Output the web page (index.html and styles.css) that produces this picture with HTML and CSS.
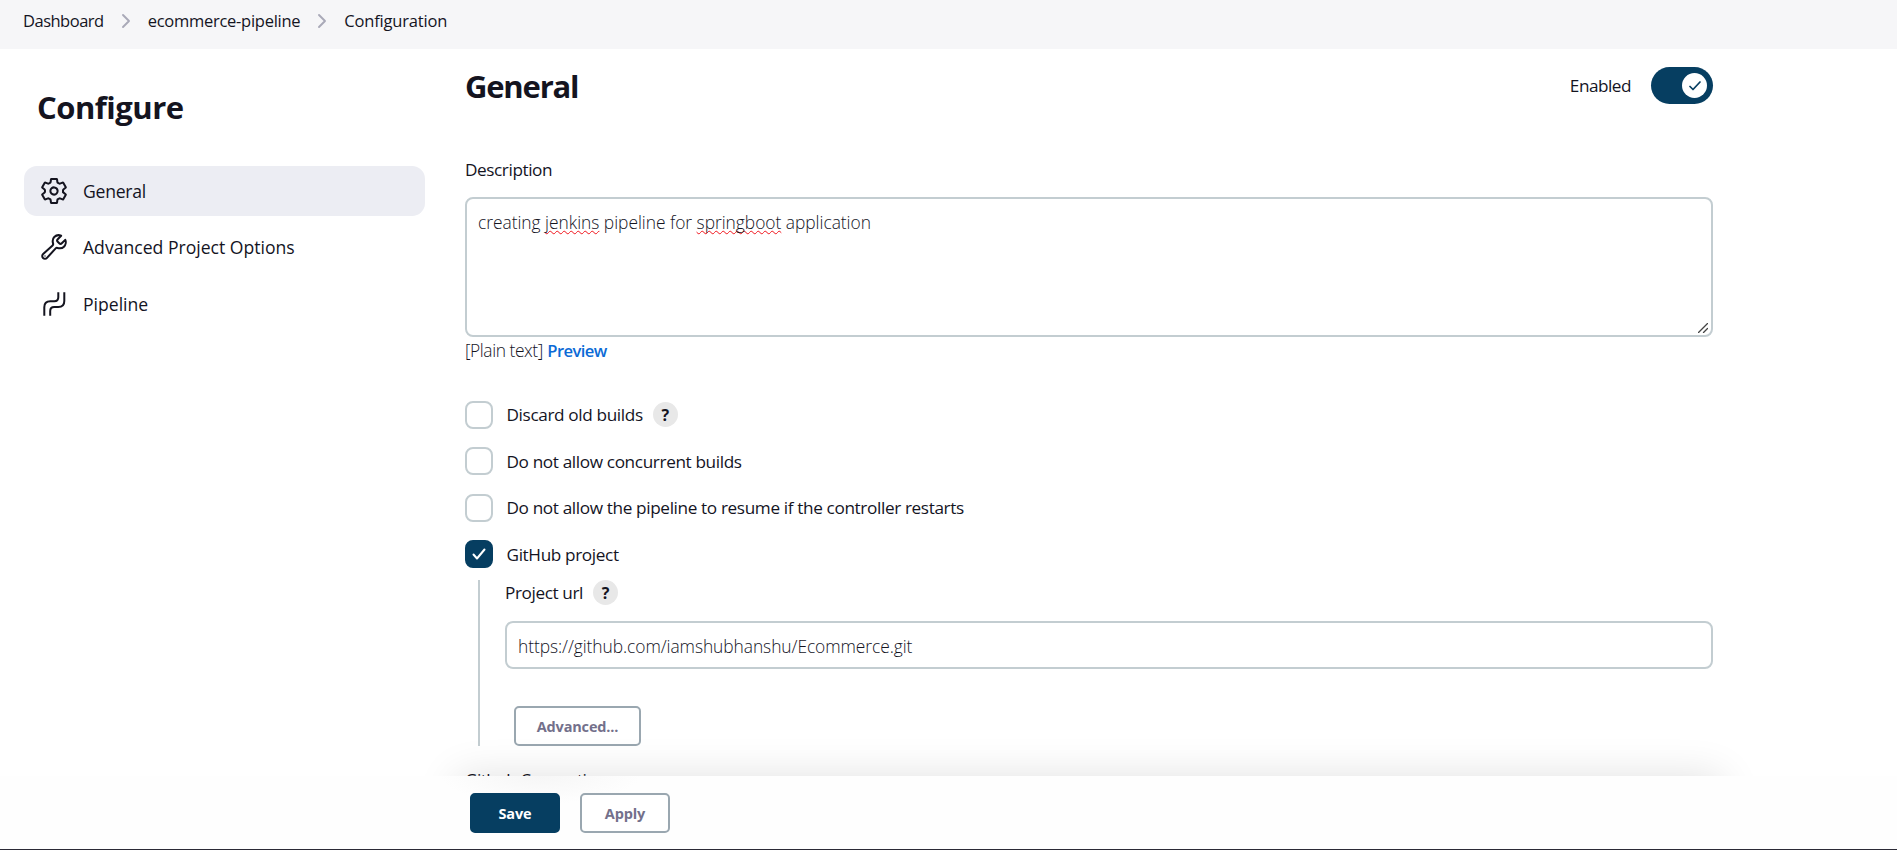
FILE: index.html
```html
<!DOCTYPE html>
<html lang="en">
<head>
<meta charset="utf-8">
<title>ecommerce-pipeline Config</title>
<link rel="stylesheet" href="styles.css">
</head>
<body>
<nav class="breadcrumbs">
  <span class="crumb crumb-root">Dashboard</span>
  <svg class="chevron" viewBox="0 0 10 16"><path d="M2 2l6 6-6 6"/></svg>
  <span class="crumb">ecommerce-pipeline</span>
  <svg class="chevron" viewBox="0 0 10 16"><path d="M2 2l6 6-6 6"/></svg>
  <span class="crumb crumb-last">Configuration</span>
</nav>
<div class="page">
  <aside class="sidebar">
    <h1 class="title">Configure</h1>
    <div class="task task-active">
      <svg class="icon" viewBox="26 26 460 460"><path d="M262.29 192.31a64 64 0 1057.4 57.4 64.13 64.13 0 00-57.4-57.4zM416.39 256a154.34 154.34 0 01-1.53 20.79l45.21 35.46a10.81 10.81 0 012.45 13.75l-42.77 74a10.81 10.81 0 01-13.14 4.59l-44.9-18.08a16.11 16.11 0 00-15.17 1.75A164.48 164.48 0 01325 400.8a15.94 15.94 0 00-8.82 12.14l-6.73 47.89a11.08 11.08 0 01-10.68 9.17h-85.54a11.11 11.11 0 01-10.69-8.87l-6.72-47.82a16.07 16.07 0 00-9-12.22 155.3 155.3 0 01-21.46-12.57 16 16 0 00-15.11-1.71l-44.89 18.07a10.81 10.81 0 01-13.14-4.58l-42.77-74a10.8 10.8 0 012.45-13.75l38.21-30a16.05 16.05 0 006-14.08c-.36-4.17-.58-8.33-.58-12.5s.21-8.27.58-12.35a16 16 0 00-6.07-13.94l-38.19-30A10.81 10.81 0 0149.48 186l42.77-74a10.81 10.81 0 0113.14-4.59l44.9 18.08a16.11 16.11 0 0015.17-1.75A164.48 164.48 0 01187 111.2a15.94 15.94 0 008.82-12.14l6.73-47.89A11.08 11.08 0 01213.23 42h85.54a11.11 11.11 0 0110.69 8.87l6.72 47.82a16.07 16.07 0 009 12.22 155.3 155.3 0 0121.46 12.57 16 16 0 0015.11 1.71l44.89-18.07a10.81 10.81 0 0113.14 4.58l42.77 74a10.8 10.8 0 01-2.45 13.75l-38.21 30a16.05 16.05 0 00-6.05 14.08c.33 4.14.55 8.3.55 12.47z"/></svg>
      <span class="task-label task-label-active">General</span>
    </div>
    <div class="task">
      <svg class="icon" viewBox="26 26 460 460"><path d="M393.87 190a32.1 32.1 0 01-45.25 0l-26.57-26.57a32.09 32.09 0 010-45.26L382.19 58a1 1 0 00-.3-1.64c-38.82-16.64-89.15-8.16-121.11 23.57-30.58 30.35-32.32 76-21.12 115.84a31.93 31.93 0 01-9.06 32.08L64 380a48.17 48.17 0 1068 68l153.86-167a31.93 31.93 0 0131.6-9.13c39.54 10.59 84.54 8.6 114.72-21.19 32.49-32 39.5-88.56 23.75-120.93a1 1 0 00-1.6-.26z"/><path class="dot" d="M97 415h.1"/></svg>
      <span class="task-label">Advanced Project Options</span>
    </div>
    <div class="task">
      <svg class="icon icon-pipe" viewBox="0 0 26 26"><path d="M3.300 24.700V16.200q0-6 6-6h4q4 0 4-4V1.300M9.200 24.700V20q0-4 4-4h4.100q6 0 6-6V1.300"/></svg>
      <span class="task-label">Pipeline</span>
    </div>
  </aside>
  <main class="config">
    <header class="section-head">
      <h2 class="section-title">General</h2>
      <div class="toggle">
        <span class="toggle-label">Enabled</span>
        <span class="switch"><span class="knob"><svg class="knob-check" viewBox="0 0 12 10"><path d="M1 5.500l3 3L11 1"/></svg></span></span>
      </div>
    </header>
    <div class="label">Description</div>
    <div class="textarea">creating <span class="misspelt">jenkins</span> pipeline for <span class="misspelt">springboot</span> application
      <svg class="grip" viewBox="0 0 10 10"><path d="M.5 9.500l9-9M5.500 9.500l4-4"/></svg>
    </div>
    <div class="format"><span class="plain">[Plain text]</span> <a class="link">Preview</a></div>
    <div class="option"><span class="box"></span><span class="option-label">Discard old builds</span><span class="help">?</span></div>
    <div class="option"><span class="box"></span><span class="option-label">Do not allow concurrent builds</span></div>
    <div class="option"><span class="box"></span><span class="option-label">Do not allow the pipeline to resume if the controller restarts</span></div>
    <div class="option"><span class="box box-on"><svg class="box-check" viewBox="0 0 14 12"><path d="M1.500 6.500l3.500 4L12.500 1.500"/></svg></span><span class="option-label">GitHub project</span></div>
    <div class="nested">
      <div class="nested-label"><span class="nested-text">Project url</span><span class="help">?</span></div>
      <div class="input">https://github.com/iamshubhanshu/Ecommerce.git</div>
      <span class="button advanced">Advanced...</span>
    </div>
    <div class="next-label">Github Connection</div>
  </main>
</div>
<div class="shade"></div>
<footer class="actions">
  <span class="button primary">Save</span>
  <span class="button">Apply</span>
</footer>
</body>
</html>
```
FILE: styles.css
```css
* { box-sizing: border-box; }
body {
  margin: 0;
  height: 850px;
  overflow: hidden;
  background: #fff;
  color: #14141f;
  font: 300 17.400px/24px "Open Sans", "Noto Sans", sans-serif;
}
svg { fill: none; stroke: currentColor; stroke-linecap: round; stroke-linejoin: round; flex: none; }
.breadcrumbs {
  display: flex;
  align-items: center;
  height: 49px;
  padding: 0 23px 7px;
  background: #f6f6f8;
}
.crumb { font-size: 16.500px; font-weight: 400; letter-spacing: -.27px; }
.crumb-root { letter-spacing: -.5px; }
.crumb-last { letter-spacing: -.18px; }
.chevron { width: 10px; height: 16px; margin: 0 17px; color: #a9a9b8; stroke-width: 1.9; }
.page { display: flex; }
.sidebar { display: flex; flex-direction: column; gap: 6.500px; width: 465px; padding: 37px 40px 0 24px; }
.title { margin: 0 0 30px; padding-left: 13px; font-size: 31px; line-height: 42px; font-weight: 700; letter-spacing: -.5px; height: 43px; }
.task { display: flex; align-items: center; gap: 16px; height: 50px; padding: 0 17px; border-radius: 13px; }
.task-active { background: #ecedf3; }
.icon { width: 26px; height: 26px; stroke-width: 36; }
.dot { stroke-width: 24; }
.icon-pipe { stroke-width: 2; stroke-linecap: butt; }
.task-label { font-size: 17.600px; font-weight: 400; }
.task-label-active { letter-spacing: -.25px; }
.config { width: 1248px; height: 801px; }
.section-head { display: flex; justify-content: space-between; height: 75px; padding-top: 18px; }
.section-title { margin: 0; font-size: 31px; line-height: 38px; font-weight: 700; letter-spacing: -1.200px; }
.toggle { display: flex; gap: 20px; align-items: center; height: 37px; }
.toggle-label { padding-top: 1px; font-size: 17.200px; font-weight: 400; letter-spacing: -.5px; }
.switch { display: flex; align-items: center; justify-content: flex-end; width: 62px; height: 37px; padding: 6px; border-radius: 19px; background: #063e61; }
.knob { display: flex; align-items: center; justify-content: center; width: 25px; height: 25px; border-radius: 50%; background: #fff; color: #063e61; }
.knob-check { width: 12px; height: 10px; stroke-width: 1.7; }
.label { padding-top: 34px; height: 73px; font-size: 17.200px; font-weight: 400; letter-spacing: -.42px; }
.textarea { position: relative; height: 140px; padding: 11px; border: 2px solid #c3cdd1; border-radius: 8px; letter-spacing: -.03px; }
.misspelt { text-decoration: underline wavy #f0141c 1px; text-decoration-skip-ink: none; text-underline-offset: 1px; }
.grip { position: absolute; right: 3px; bottom: 2px; width: 10px; height: 10px; color: #444; stroke-width: 1.3; }
.format { height: 60.800px; padding-top: 1px; }
.plain { letter-spacing: -.43px; }
.link { color: #0b6ad6; font-size: 16.600px; font-weight: 600; letter-spacing: -.6px; }
.option { display: flex; align-items: center; height: 46.400px; padding-bottom: 12px; }
.option-label { margin-left: 13.500px; padding-top: 1px; font-size: 17.200px; font-weight: 400; letter-spacing: -.37px; }
.box { display: flex; align-items: center; justify-content: center; width: 28px; height: 28px; border: 2px solid #c3cdd1; border-radius: 8px; }
.box-on { border-color: #063e61; background: #063e61; color: #fff; }
.box-check { width: 14px; height: 12px; stroke-width: 2; }
.help { display: flex; align-items: center; justify-content: center; width: 25px; height: 25px; margin-left: 10px; border-radius: 50%; background: #e8e8e8; font-size: 16px; font-weight: 700; letter-spacing: 0; }
.nested { margin: -3.300px 0 22px 13px; height: 166px; padding-left: 25px; border-left: 2px solid #c3cdd1; }
.nested-label { display: flex; height: 41px; font-size: 17.200px; font-weight: 400; letter-spacing: -.4px; }
.nested-text { padding-top: 1px; }
.input { height: 48px; padding: 11px 11px 0; border: 2px solid #c3cdd1; border-radius: 8px; letter-spacing: -.07px; }
.button { display: inline-flex; align-items: center; justify-content: center; width: 90px; height: 40px; padding-top: 1px; border: 2px solid #9aa7b0; border-radius: 5px; background: #fff; color: #73708b; font-size: 14.500px; font-weight: 700; letter-spacing: -.15px; }
.advanced { width: 127px; margin: 37px 0 0 9px; }
.primary { border-color: #063e61; background: #063e61; color: #fff; }
.next-label { font-size: 17.200px; font-weight: 400; letter-spacing: -.55px; }
/* Sticky action bar: the shade sits beneath it and only shows above its top edge */
.shade { position: absolute; left: 456px; top: 776px; width: 1266px; height: 110px; box-shadow: 0 0 42px rgba(0, 0, 0, .12); }
.actions {
  position: absolute;
  left: 0;
  top: 776px;
  display: flex;
  gap: 20px;
  width: 100%;
  height: 74px;
  padding: 17px 0 0 470px;
  border-bottom: 1px solid #2b2a36;
  background: radial-gradient(ellipse 100px 28px at 540px 0, #f6f6f6, #fefefe) #fefefe;
}
```
